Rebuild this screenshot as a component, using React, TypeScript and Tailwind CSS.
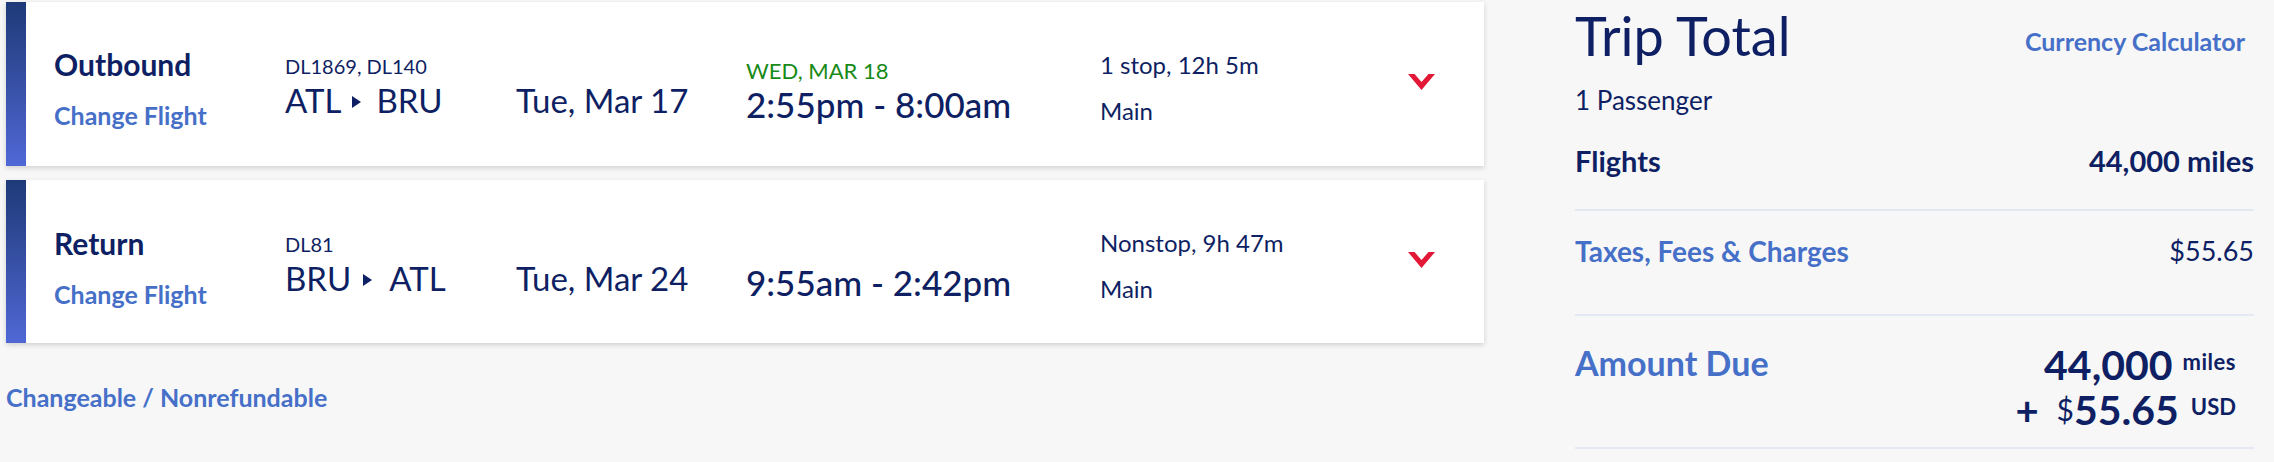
import React from "react";

const NAVY = "text-[#0e1f63]";

function Triangle() {
  return (
    <svg width="9" height="12" viewBox="0 0 9 12" className="block">
      <polygon points="0,0 9,6 0,12" fill="#0e1f63" />
    </svg>
  );
}

function Chevron() {
  return (
    <svg width="27" height="16" viewBox="0 0 27 16" className="block">
      <polygon points="0,0 6.5,0 13.5,8 20.5,0 27,0 13.5,16" fill="#e31837" />
    </svg>
  );
}

type Flight = {
  label: string;
  codes: string;
  from: string;
  to: string;
  date: string;
  nextDay?: string;
  time: string;
  stops: string;
  cabin: string;
  h: string;
  labelPt: string;
  gapA: string;
  gapB: string;
};

function FlightCard({ f }: { f: Flight }) {
  return (
    <div className={`flex bg-white shadow-[0_2px_5px_rgba(0,0,0,0.16)] ${f.h}`}>
      <div className="w-[20px] shrink-0 bg-linear-to-b from-[#1f3a78] to-[#5068d6]" />
      <div className={`w-[259px] shrink-0 pl-[28px] ${f.labelPt}`}>
        <div className={`text-[30px] leading-[36px] font-bold ${NAVY}`}>{f.label}</div>
        <div className="mt-[17px] text-[25px] leading-[32px] font-bold text-[#4670c8]">Change Flight</div>
      </div>
      <div className="w-[231px] shrink-0 pt-[52px]">
        <div className={`text-[20px] leading-[24px] ${NAVY}`}>{f.codes}</div>
        <div className={`mt-[2px] flex items-center text-[33px] leading-[40px] ${NAVY}`}>
          <span>{f.from}</span>
          <span className={`${f.gapA} mt-[4px]`}>
            <Triangle />
          </span>
          <span className={f.gapB}>{f.to}</span>
        </div>
      </div>
      <div className={`w-[230px] shrink-0 pt-[78px] text-[33px] leading-[40px] ${NAVY}`}>{f.date}</div>
      <div className="w-[354px] shrink-0 pt-[55px]">
        {f.nextDay ? (
          <div className="text-[22px] leading-[28px] text-[#178a17]">{f.nextDay}</div>
        ) : (
          <div className="h-[28px]" />
        )}
        <div className={`-mt-[1px] text-[35px] leading-[40px] font-medium ${NAVY}`}>{f.time}</div>
      </div>
      <div className="w-[308px] shrink-0 pt-[49px]">
        <div className={`text-[24px] leading-[28px] ${NAVY}`}>{f.stops}</div>
        <div className={`mt-[18px] text-[24px] leading-[28px] ${NAVY}`}>{f.cabin}</div>
      </div>
      <div className="pt-[72px]">
        <Chevron />
      </div>
    </div>
  );
}

const flights: Flight[] = [
  {
    label: "Outbound",
    codes: "DL1869, DL140",
    from: "ATL",
    to: "BRU",
    date: "Tue, Mar 17",
    nextDay: "WED, MAR 18",
    time: "2:55pm - 8:00am",
    stops: "1 stop, 12h 5m",
    cabin: "Main",
    h: "h-[164px]",
    labelPt: "pt-[44px]",
    gapA: "ml-[11px]",
    gapB: "ml-[15px]",
  },
  {
    label: "Return",
    codes: "DL81",
    from: "BRU",
    to: "ATL",
    date: "Tue, Mar 24",
    time: "9:55am - 2:42pm",
    stops: "Nonstop, 9h 47m",
    cabin: "Main",
    h: "h-[163px]",
    labelPt: "pt-[45px]",
    gapA: "ml-[12px]",
    gapB: "ml-[17px]",
  },
];

export default function App() {
  return (
    <div className="flex w-[2274px] h-[462px] overflow-hidden bg-[#f7f7f8] font-['Lato','Liberation_Sans',sans-serif]">
      <div className="ml-[6px] w-[1478px] shrink-0 pt-[2px] flex flex-col">
        <FlightCard f={flights[0]} />
        <div className="mt-[14px]">
          <FlightCard f={flights[1]} />
        </div>
        <div className="mt-[38px] text-[25px] leading-[32px] font-bold text-[#4670c8]">
          Changeable / Nonrefundable
        </div>
      </div>

      <div className="ml-[91px] w-[679px] shrink-0 flex flex-col">
        <div className="pt-[4px] flex items-start justify-between">
          <div className={`text-[54px] leading-[64px] ${NAVY}`}>Trip Total</div>
          <div className="mt-[22px] mr-[9px] text-[25px] leading-[30px] font-bold text-[#4670c8]">
            Currency Calculator
          </div>
        </div>
        <div className={`mt-[17px] text-[26px] leading-[30px] ${NAVY}`}>1 Passenger</div>
        <div className={`mt-[29px] flex items-start justify-between text-[29px] leading-[34px] font-bold ${NAVY}`}>
          <span>Flights</span>
          <span>44,000 miles</span>
        </div>
        <div className="mt-[31px] h-[2px] bg-[#e3e8f3]" />
        <div className="mt-[24px] flex items-start justify-between leading-[32px]">
          <span className="text-[28px] font-bold text-[#4670c8]">Taxes, Fees &amp; Charges</span>
          <span className={`text-[27px] ${NAVY}`}>$55.65</span>
        </div>
        <div className="mt-[47px] h-[2px] bg-[#e3e8f3]" />
        <div className="mt-[27px] flex items-start justify-between">
          <div className="text-[34px] leading-[40px] font-bold text-[#4670c8]">Amount Due</div>
          <div className={`-mt-[1px] mr-[18px] flex flex-col items-end ${NAVY}`}>
            <div className="flex items-start">
              <span className="text-[41px] leading-[46px] font-bold">44,000</span>
              <span className="ml-[10px] mt-[9px] text-[22px] leading-[22px] font-bold tracking-[0.5px]">miles</span>
            </div>
            <div className="-mt-[1px] flex items-start">
              <span className="text-[40px] leading-[46px] font-bold">+</span>
              <span className="ml-[18px] mt-[4px] text-[30px] leading-[36px]">$</span>
              <span className="text-[41px] leading-[46px] font-bold">55.65</span>
              <span className="ml-[12px] mt-[9px] text-[22px] leading-[22px] font-bold">USD</span>
            </div>
          </div>
        </div>
        <div className="mt-[14px] h-[2px] bg-[#e3e8f3]" />
      </div>
    </div>
  );
}
